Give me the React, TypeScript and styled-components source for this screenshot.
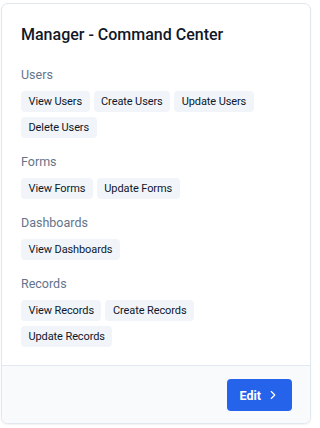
import React from 'react';
import styled, {createGlobalStyle} from 'styled-components';
import {ChevronRight} from 'lucide-react';

const GlobalStyle = createGlobalStyle`
  html, body {
    margin: 0;
    padding: 0;
    background: #ffffff;
  }

  body {
    font-family: Roboto, "Noto Sans", Arial, sans-serif;
    -webkit-font-smoothing: antialiased;
  }
`;

type Section = {
  title: string;
  permissions: string[];
};

const sections: Section[] = [
  {title: 'Users', permissions: ['View Users', 'Create Users', 'Update Users', 'Delete Users']},
  {title: 'Forms', permissions: ['View Forms', 'Update Forms']},
  {title: 'Dashboards', permissions: ['View Dashboards']},
  {title: 'Records', permissions: ['View Records', 'Create Records', 'Update Records']},
];

const Page = styled.div`
  padding: 3px 5px 4px 1px;
`;

const Card = styled.div`
  width: 310px;
  box-sizing: border-box;
  border: 1px solid #e2e8f0;
  border-radius: 7px;
  background: #ffffff;
  box-shadow: 0 1px 2px rgba(15, 23, 42, 0.06);
  overflow: hidden;
`;

const Body = styled.div`
  padding: 19px 26px 18px 19px;
`;

const Title = styled.h2`
  margin: 0 0 18px;
  font-size: 16px;
  line-height: 24px;
  font-weight: 500;
  color: #111827;
`;

const Sections = styled.div`
  display: grid;
  gap: 14px;
`;

const SectionLabel = styled.h3`
  margin: 0 0 6px;
  font-size: 12.5px;
  line-height: 20px;
  font-weight: 400;
  color: #64748b;
`;

const ChipList = styled.div`
  display: flex;
  flex-wrap: wrap;
  gap: 5px 4px;
`;

const Chip = styled.span`
  display: inline-flex;
  align-items: center;
  height: 21px;
  padding: 0 7.5px;
  border-radius: 4px;
  background: #f1f5f9;
  color: #0f172a;
  font-size: 11px;
  font-weight: 400;
  letter-spacing: -0.1px;
  white-space: nowrap;
`;

const Footer = styled.div`
  display: flex;
  justify-content: flex-end;
  padding: 13px 18px 12px;
  border-top: 1px solid #e2e8f0;
  background: #f8fafc;
`;

const EditButton = styled.button`
  display: inline-flex;
  align-items: center;
  gap: 5px;
  height: 32px;
  padding: 0 12px 0 13px;
  border: none;
  border-radius: 4px;
  background: #2563eb;
  color: #ffffff;
  font-family: inherit;
  font-size: 12.5px;
  font-weight: 700;
  cursor: pointer;
`;

export default function App() {
  return (
    <Page>
      <GlobalStyle />
      <Card>
        <Body>
          <Title>Manager - Command Center</Title>
          <Sections>
            {sections.map((section) => (
              <div key={section.title}>
                <SectionLabel>{section.title}</SectionLabel>
                <ChipList>
                  {section.permissions.map((p) => (
                    <Chip key={p}>{p}</Chip>
                  ))}
                </ChipList>
              </div>
            ))}
          </Sections>
        </Body>
        <Footer>
          <EditButton type="button">
            Edit
            <ChevronRight size={14} strokeWidth={2} />
          </EditButton>
        </Footer>
      </Card>
    </Page>
  );
}
